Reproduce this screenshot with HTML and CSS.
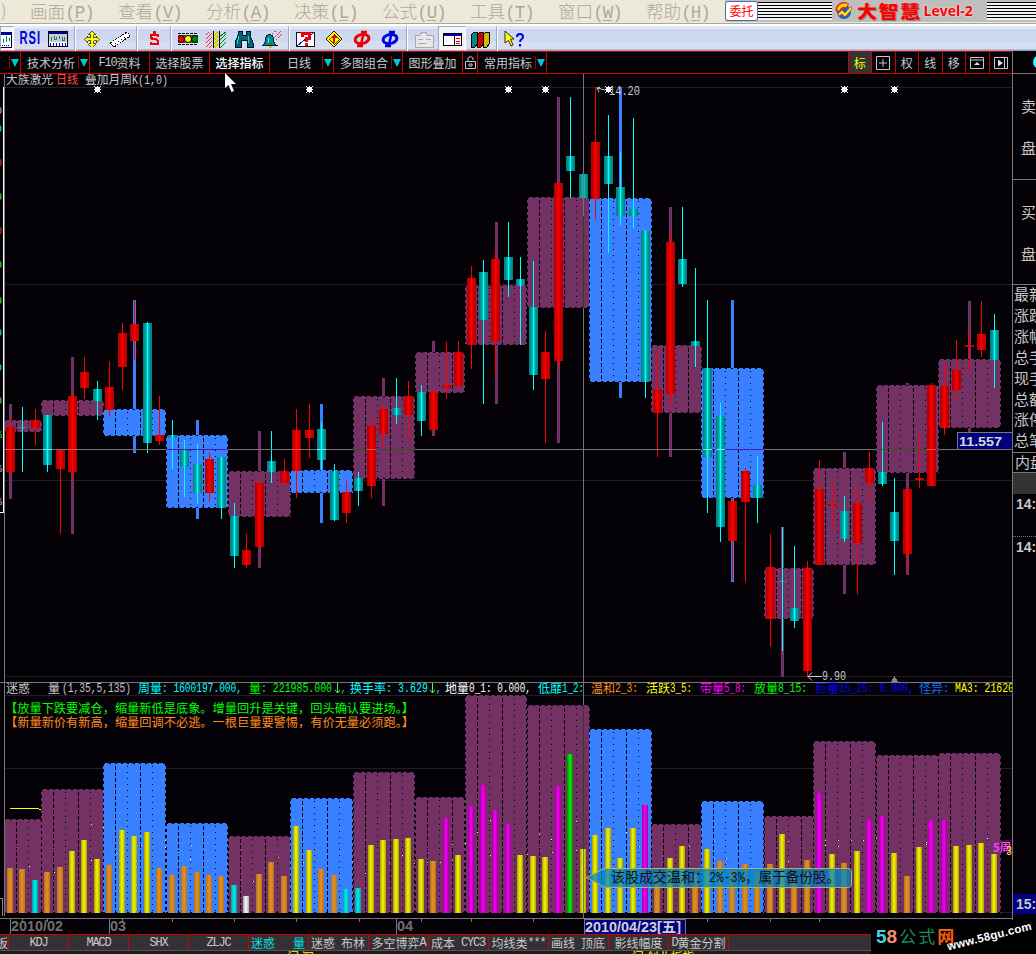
FILE: index.html
```html
<!DOCTYPE html>
<html lang="zh-CN">
<head>
    <meta charset="UTF-8">
    <title>大智慧 Level-2</title>
    <link rel="stylesheet" href="styles.css">
</head>
<body>
    <div class="menubar">
        <span class="menu-first">)</span>
        <span class="menu">画面<i>(<u>P</u>)</i></span>
        <span class="menu">查看<i>(<u>V</u>)</i></span>
        <span class="menu">分析<i>(<u>A</u>)</i></span>
        <span class="menu">决策<i>(<u>L</u>)</i></span>
        <span class="menu">公式<i>(<u>U</u>)</i></span>
        <span class="menu">工具<i>(<u>T</u>)</i></span>
        <span class="menu">窗口<i>(<u>W</u>)</i></span>
        <span class="menu">帮助<i>(<u>H</u>)</i></span>
        <div class="brand">
            <button class="trade">委托</button>
            <span class="stripes stripes-left"></span>
            <span class="logo">
                <svg width="18" height="18" viewBox="0 0 18 18">
                    <circle cx="9" cy="10" r="7" fill="#1c62c4"/>
                    <path d="M1 10A8 8 0 0 1 14 2L12 6A5 5 0 0 0 6 9Z" fill="#e02a18"/>
                    <path d="M2 7Q5 0 13 2L11 5Q6 4 4 9Z" fill="#ffd800"/>
                    <path d="M3 12L7 8L10 11L16 4L17 7L10 15L7 12L4 14Z" fill="#ffe21a" stroke="#c43" stroke-width=".7"/>
                </svg>
                <b class="logo-cn">大智慧</b><b class="logo-en">Level-2</b>
            </span>
            <span class="stripes stripes-right"></span>
        </div>
    </div>

    <div class="toolbar">
        <span class="tool first pressed"><svg viewBox="0 0 20 20"><rect x="-4" y="3" width="22" height="15" fill="#fff" stroke="#002"/><rect x="0" y="3" width="18" height="3" fill="#0000a0"/><path d="M7 8v6M10 10v4M13 7v6M16 9v3" stroke="#088"/><path d="M7 16h10" stroke="#00f" stroke-dasharray="1 1"/></svg></span>
        <span class="tool rsi"><span>RSI</span></span>
        <span class="tool"><svg viewBox="0 0 20 20"><rect x="0.500" y="2.500" width="19" height="15" fill="#ccc" stroke="#000"/><rect x="1" y="3" width="18" height="2" fill="#000080"/><path d="M3 8v4M6 7v3h2v-2M11 10v-3M14 8v3h2v-3" fill="none" stroke="#088"/><rect x="1" y="13" width="18" height="4" fill="#fff"/><path d="M2 15.500h16" stroke="#00f" stroke-width="3" stroke-dasharray="1 2"/></svg></span>
        <span class="sep"></span>
        <span class="tool"><svg viewBox="0 0 20 20"><path d="M10 2l3.500 3.500H11.500v3h3V6.500L18 10l-3.500 3.500v-2h-3v3h2L10 18l-3.500-3.500h2v-3h-3v2L2 10l3.500-3.500v2h3v-3h-2z" fill="#ff0" stroke="#330" stroke-width=".8"/></svg></span>
        <span class="tool"><svg viewBox="0 0 20 20"><path d="M0 14L17 3l3 4L4 18z" fill="#fff" stroke="#000" stroke-dasharray="2 1"/><path d="M5 14l1 1M8 12l1 1M11 10l1 1M14 8l1 1" stroke="#000"/></svg></span>
        <span class="sep"></span>
        <span class="tool"><svg viewBox="0 0 20 20"><path d="M14 8V6H7v3l2 1h3l2 2v3H7v-2M10.500 2v3" fill="none" stroke="#f00" stroke-width="2.500"/></svg></span>
        <span class="sep"></span>
        <span class="tool"><svg class="smooth" viewBox="0 0 20 20"><path d="M0 4.500h20M0 15.500h20" stroke="#000" stroke-dasharray="3 1"/><path d="M0 6h20v8H0z" fill="#555"/><circle cx="3" cy="10" r="3.500" fill="#e00" stroke="#000"/><circle cx="10" cy="10" r="3.500" fill="#ff0" stroke="#000"/><circle cx="17" cy="10" r="3.500" fill="#080" stroke="#000"/></svg></span>
        <span class="tool"><svg viewBox="0 0 20 20"><path d="M0 6l3-3M0 10l6-6M0 14l6-6M0 18l6-6M3 19l3-3" stroke="#f22"/><path d="M8 7l4-4M8 11l4-4M8 15l4-4M8 19l4-4" stroke="#dc0" stroke-width="2"/><path d="M14 7l6-4M14 11l6-6M14 15l6-6M14 19l6-6" stroke="#080"/><path d="M7 2v17M13.500 2v17" stroke="#000"/></svg></span>
        <span class="tool"><svg viewBox="0 0 20 20"><path d="M4 2h4v4h4V2h4v4l3 8v4h-6v-7H7v7H1v-4l3-8z" fill="#067" stroke="#013"/><path d="M5 7l-2 8M14 7l1 7" stroke="#3cc"/></svg></span>
        <span class="tool"><svg viewBox="0 0 20 20"><path d="M1 16c3-2 2-4 3-8 1-3 6-3 7 0 1 4 0 6 3 8z" fill="#088" stroke="#023"/><path d="M6 9v5" stroke="#6ee"/><path d="M7 17h3v2H7z" fill="#cc0"/><path d="M10 5l4-3M13 8l6-6M14 11l6-6" stroke="#f33" stroke-dasharray="2 1"/></svg></span>
        <span class="sep"></span>
        <span class="tool"><svg viewBox="0 0 20 20"><rect x="0.500" y="3.500" width="18" height="14" fill="#fff" stroke="#111"/><path d="M1 17L17 4" stroke="#00f"/><path d="M6 8V4.500h7.500V9H10v3.500" fill="none" stroke="#e00" stroke-width="3"/><path d="M8.500 14h3.500v3H8.500z" fill="#e00"/></svg></span>
        <span class="tool"><svg viewBox="0 0 20 20"><path d="M10 2l8 8-8 8-8-8z" fill="#ff0" stroke="#220"/><path d="M10 4.500l5.500 5.500-5.500 5.500L4.500 10z" fill="none" stroke="#000" stroke-width=".8"/><path d="M10 14V7M7.500 9L10 6.500 12.500 9" fill="none" stroke="#e00" stroke-width="1.500"/></svg></span>
        <span class="tool"><svg class="smooth" viewBox="0 0 20 20"><ellipse cx="10" cy="10" rx="7" ry="4.500" transform="rotate(-12 10 10)" fill="none" stroke="#e00" stroke-width="3"/><path d="M12 3L8.500 17M9 3h6M5 17h6" stroke="#e00" stroke-width="2.500"/></svg></span>
        <span class="tool"><svg class="smooth" viewBox="0 0 20 20"><ellipse cx="10" cy="10" rx="7" ry="4.500" transform="rotate(-12 10 10)" fill="none" stroke="#00d" stroke-width="3"/><path d="M12 3L8.500 17M9 3h6M5 17h6" stroke="#00d" stroke-width="2.500"/></svg></span>
        <span class="sep"></span>
        <span class="tool"><svg viewBox="0 0 20 20"><path d="M1 6h5l2-3h4l1 3h6v12H1z" fill="#e8e8ea" stroke="#aaa"/><path d="M4 10h5M4 14h8M12 10h5" stroke="#aaa"/></svg></span>
        <span class="tool pressed"><svg viewBox="0 0 20 20"><rect x="1.500" y="4.500" width="18" height="12" fill="#fff" stroke="#000"/><rect x="2" y="5" width="17" height="2" fill="#0000b0"/><path d="M12.500 7v10" stroke="#000"/><path d="M14 9.500h4M14 12.500h4M14 14.500h4" stroke="#e00"/></svg></span>
        <span class="tool"><svg viewBox="0 0 20 20"><path d="M1 6l3-3h3v12l-2 3H1z" fill="#088" stroke="#000"/><path d="M7 6l3-3h3v12l-2 3H7z" fill="#c00" stroke="#000"/><path d="M13 6l3-3h3v12l-2 3h-4z" fill="#cb0" stroke="#000"/></svg></span>
        <span class="sep"></span>
        <span class="tool"><svg class="smooth" viewBox="0 0 20 20"><path d="M1 2l9 8H6.500l2.500 6-2 1-2.500-5.500L1 14z" fill="#ff0" stroke="#000" stroke-width=".8"/><path d="M13 8c0-4 6-4 6 0 0 2-3 2-3 5M16 15v2.500" fill="none" stroke="#00e" stroke-width="2"/></svg></span>
    </div>

    <div class="workspace">
        <div class="left">
            <div class="tabs">
                <span class="tab t-drop0"><i class="drop"></i></span>
                <span class="tab t-tech">技术分析<i class="drop"></i></span>
                <span class="tab t-f10"><i class="half">F10</i>资料</span>
                <span class="tab t-pick">选择股票</span>
                <span class="tab t-index lit">选择指标</span>
                <span class="tab t-day">日线<i class="drop"></i></span>
                <span class="tab t-multi">多图组合<i class="drop"></i></span>
                <span class="tab t-over">图形叠加</span>
                <span class="tab t-lock"><svg width="13" height="15" viewBox="0 0 13 15"><path d="M4 6V3q3-3 5 0v2M1.500 6.500h10v7h-10zM5 9h3v2H5z" fill="none" stroke="#c8c8c8"/></svg></span>
                <span class="tab t-common">常用指标<i class="drop"></i></span>
                <span class="fill"></span>
                <span class="tab sq active">标</span>
                <span class="tab sq"><svg width="14" height="14" viewBox="0 0 14 14"><path d="M.5.5h13v13H.5zM7 3v8M3 7h8" fill="none" stroke="#c8c8c8"/></svg></span>
                <span class="tab sq">权</span>
                <span class="tab sq">线</span>
                <span class="tab sq">移</span>
                <span class="tab sq"><svg width="14" height="14" viewBox="0 0 14 14"><path d="M.5 1.500h13v11H.5zM.5 4h13" fill="none" stroke="#c8c8c8"/><path d="M7 6l3 3H4z" fill="#ddd"/></svg></span>
                <span class="tab sq"><svg width="14" height="14" viewBox="0 0 14 14"><path d="M.5 1.500h13v11H.5zM10.500 1.500v11" fill="none" stroke="#c8c8c8"/><path d="M4 3.500l5 3.500-5 3.500z" fill="#ddd"/></svg></span>
            </div>
            <svg id="chart" width="1013" height="861" viewBox="0 74 1013 861"></svg>
        </div>
        <div class="side">
            <div class="side-top"><span class="dot"></span></div>
            <div class="side-box sell"><span>卖</span><span>盘</span></div>
            <div class="side-box buy"><span>买</span><span>盘</span></div>
            <div class="side-box quote">
                <span>最新</span><span>涨跌</span><span>涨幅</span><span>总手</span><span>现手</span><span>总额</span><span>涨停</span><span>总笔</span>
            </div>
            <div class="side-box inner"><span>内盘</span></div>
            <div class="side-head"></div>
            <div class="side-time">14:</div>
            <div class="side-time dotted">14:</div>
            <div class="side-now">15:</div>
        </div>
    </div>

    <div class="bottom-tabs">
        <span class="btab b-first">板</span>
        <span class="btab"><i class="half">KDJ</i></span>
        <span class="btab"><i class="half">MACD</i></span>
        <span class="btab"><i class="half">SHX</i></span>
        <span class="btab"><i class="half">ZLJC</i></span>
        <span class="btab on wide"><em>迷惑</em><em>量</em></span>
        <span class="btab wide"><em>迷惑</em><em>布林</em></span>
        <span class="btab">多空博弈<i class="half">A</i></span>
        <span class="btab wide"><em>成本</em><i class="half">CYC3</i></span>
        <span class="btab">均线类<i class="half">***</i></span>
        <span class="btab wide"><em>画线</em><em>顶底</em></span>
        <span class="btab">影线幅度</span>
        <span class="btab"><i class="half">D</i>黄金分割</span>
    </div>
    <div class="ticker"><span class="tick-a">门 深</span><span class="tick-b">门 创业板指</span></div>

    <div class="watermark">
        <span class="wm-58"><b>5</b><b>8</b></span><span class="wm-cn"><b>公</b><b>式</b><b>网</b></span>
        <span class="wm-url">www.58gu.com</span>
    </div>
    <svg class="pointer" width="12" height="19" viewBox="0 0 12 19"><path d="M0 0v15l3.500-3 3 7 2.500-1-3-7H11z" fill="#fff"/></svg>

    <script src="chart.js"></script>
</body>
</html>
```
FILE: styles.css
```css
* {
    box-sizing: border-box;
}
body {
    margin: 0;
    width: 1036px;
    height: 954px;
    overflow: hidden;
    background: #040206;
    color: #c8c8c8;
    font-family: "Noto Sans CJK SC", sans-serif;
    font-size: 12px;
    display: flex;
    flex-direction: column;
}
i, em {
    font-style: normal;
}
.half {
    font-family: "Liberation Mono", monospace;
    letter-spacing: -1.2px;
    padding-top: 2px;
}

/* menu */
.menubar {
    height: 26px;
    flex: none;
    display: flex;
    background: linear-gradient(#ece9d8 23px, #aca899 23px, #aca899 24px, #fff 24px);
    color: #aca899;
    font-size: 17.6px;
    font-weight: 300;
    line-height: 22px;
    white-space: nowrap;
}
.menu-first {
    width: 30px;
    flex: none;
    padding-left: 1px;
    line-height: 20px;
}
.menu {
    width: 88px;
    flex: none;
}
.menu i {
    font-family: "Liberation Mono", monospace;
    letter-spacing: -1px;
}
.menu u {
    text-underline-offset: 2px;
    text-decoration-thickness: 1px;
}
.brand {
    flex: 1;
    margin-left: -9px;
    height: 22px;
    display: flex;
    align-items: center;
    background: #c0bebc;
}
.trade {
    width: 33px;
    height: 20px;
    margin: 0;
    padding: 0;
    border: 1px solid #4870a8;
    border-radius: 3px;
    background: #fff;
    color: #f00;
    font-family: inherit;
    font-size: 12px;
    line-height: 16px;
}
.stripes {
    height: 18px;
    background: repeating-linear-gradient(#000 0 1px, #f4f4f4 1px 3px);
}
.stripes-left {
    width: 74px;
}
.stripes-right {
    flex: 1;
}
.logo {
    width: 155px;
    display: flex;
    align-items: center;
    padding-left: 3px;
    color: #f00;
}
.logo-cn {
    margin-left: 4px;
    font-size: 20px;
    font-weight: 900;
    letter-spacing: 1.5px;
    text-shadow: 1px 1px 0 #888;
    transform: scaleY(0.85);
}
.logo-en {
    margin-left: 2px;
    font-family: "Open Sans", sans-serif;
    font-size: 14px;
    font-weight: 700;
    text-shadow: 0 0 2px #fff;
}

/* toolbar */
.toolbar {
    height: 25px;
    flex: none;
    display: flex;
    align-items: stretch;
    background: linear-gradient(#e0e8f6 0 3px, #cbd8f0 3px 15px, #d8def2 15px 23px, #8ca0c0 24px);
}
.tool {
    width: 28px;
    flex: none;
    display: flex;
    align-items: center;
    justify-content: center;
}
.tool svg {
    width: 20px;
    height: 20px;
    shape-rendering: crispEdges;
}
.tool svg.smooth {
    shape-rendering: auto;
}
.tool.first {
    width: 14px;
    margin-right: 2px;
    justify-content: flex-end;
    overflow: hidden;
}
.tool.first svg {
    flex: none;
}
.tool.pressed {
    background: #f4f4f6;
    border: 1px solid #a0a8b8;
    border-right-color: #fff;
}
.rsi {
    color: #0000d8;
    font-family: "Liberation Sans", sans-serif;
    font-size: 18px;
    font-weight: bold;
    letter-spacing: 1.5px;
}
.rsi span {
    transform: scaleX(0.62);
}
.sep {
    width: 6px;
    flex: none;
    background: linear-gradient(90deg, transparent 2px, #9ca8bc 2px 3px, #fff 3px 4px, transparent 4px);
}

/* main area */
.workspace {
    height: 883px;
    flex: none;
    display: flex;
}
.left {
    width: 1013px;
    flex: none;
}
.tabs {
    height: 23px;
    display: flex;
    border-top: 1px solid #d00000;
    border-bottom: 1px solid #d00000;
    line-height: 21px;
    white-space: nowrap;
}
.tab {
    flex: none;
    display: flex;
    align-items: center;
    justify-content: center;
    border-right: 1px solid #d00000;
}
.drop {
    width: 11px;
    height: 13px;
    border-left: 1px solid #a00000;
    display: flex;
    justify-content: center;
    align-items: center;
}
.drop::before {
    content: "";
    border: 4px solid transparent;
    border-top: 8px solid #00c8c8;
    border-bottom: 0;
}
.tab .drop {
    margin-left: auto;
}
.t-drop0 { width: 21px; }
.t-tech { width: 69px; padding-left: 6px; }
.t-f10 { width: 60px; }
.t-pick { width: 60px; }
.t-index { width: 60px; }
.t-day { width: 64px; padding-left: 17px; }
.t-multi { width: 69px; padding-left: 6px; }
.t-over { width: 60px; }
.t-lock { width: 15px; }
.t-common { width: 69px; padding-left: 6px; }
.lit {
    color: #fff;
    font-weight: 500;
}
.fill {
    flex: 1;
    border-right: 1px solid #d00000;
}
.sq {
    width: 23.5px;
}
.sq.active {
    background: #333;
    color: #ff0;
}
#chart {
    display: block;
    font-family: "Noto Sans CJK SC", sans-serif;
}
#chart .crisp {
    shape-rendering: crispEdges;
}

/* quote column */
.side {
    flex: 1;
    overflow: hidden;
    border-left: 1px solid #777;
    white-space: nowrap;
    font-size: 15px;
    line-height: 21px;
    margin-left: -1px;
    z-index: 1;
}
.side-top {
    height: 23px;
    padding: 4px 0 0 20px;
    border-bottom: 1px solid #777;
}
.dot {
    display: block;
    width: 14px;
    height: 14px;
    border-radius: 50%;
    background: #3ff;
}
.side-box {
    border-bottom: 1px solid #777;
}
.side-box span {
    display: block;
}
.sell, .buy {
    height: 106px;
    padding: 21px 0 0 8px;
}
.buy {
    height: 105px;
}
.sell span + span, .buy span + span {
    margin-top: 21px;
}
.quote {
    height: 168px;
    padding-left: 1px;
    line-height: 20.9px;
}
.quote span {
    position: relative;
    top: -1px;
}
.inner {
    height: 20px;
    padding-left: 2px;
    line-height: 17px;
}
.side-head {
    height: 21px;
    background: #333;
}
.side-time {
    height: 42px;
    padding-left: 3px;
    font-family: "Liberation Sans", sans-serif;
    font-size: 14px;
    font-weight: bold;
    line-height: 20px;
}
.side-time.dotted {
    border-top: 1px dotted #777;
}
.side-now {
    height: 20px;
    margin-top: 316px;
    padding-left: 3px;
    background: #000080;
    font-family: "Liberation Sans", sans-serif;
    font-size: 14px;
    font-weight: bold;
    line-height: 20px;
}

/* bottom */
.bottom-tabs {
    height: 16px;
    flex: none;
    display: flex;
    background: #333135;
    border-top: 1px solid #d00000;
    line-height: 15px;
    white-space: nowrap;
}
.btab {
    width: 60px;
    flex: none;
    display: flex;
    align-items: center;
    justify-content: center;
    border-right: 1px solid #d00000;
    overflow: hidden;
}
.b-first {
    width: 9px;
    justify-content: flex-end;
}
.wide {
    justify-content: space-between;
    padding: 0 3px 0 2px;
}
.on {
    color: #00e0e0;
}
.ticker {
    height: 4px;
    flex: none;
    overflow: hidden;
    display: flex;
    border-top: 1px solid #555;
    background: #1c1c1e;
    color: #ff0;
    line-height: 12px;
}
.tick-a {
    margin-left: 287px;
}
.tick-b {
    margin-left: 318px;
}
.watermark {
    position: absolute;
    left: 871px;
    top: 920px;
    width: 165px;
    height: 34px;
    overflow: hidden;
    background: #000;
    line-height: 32px;
    white-space: nowrap;
    z-index: 2;
}
.wm-58 {
    margin-left: 5px;
    font-family: "Liberation Sans", sans-serif;
    font-size: 19px;
}
.wm-58 b:first-child { color: #40d8e0; }
.wm-58 b:last-child { color: #f09070; }
.wm-cn {
    margin-left: 2px;
    font-size: 17px;
    letter-spacing: 2px;
}
.wm-cn b { font-weight: 400; color: #1e8a62; }
.wm-cn b:last-child { font-weight: 700; color: #f06010; }
.wm-url {
    position: absolute;
    left: 75px;
    top: 8px;
    color: #fff;
    font-family: "Liberation Sans", sans-serif;
    font-size: 11.5px;
    font-weight: bold;
    line-height: 16px;
    letter-spacing: 0.3px;
    transform: rotate(-14deg);
}
.pointer {
    position: absolute;
    left: 225px;
    top: 73px;
    z-index: 3;
}
```
FILE: chart.js
```js
// colour, high, body top, body bottom, low
const candles = [
    ['r',418,427,472,476],['c',407,427,428,472],['r',409,420,428,445],['c',415,415,465,472],['r',450,450,469,534],
    ['r',394,396,472,482],['r',357,372,388,399],['c',381,389,401,420],['r',361,387,410,417],['r',323,333,367,390],
    ['r',300,324,341,360],['c',322,323,443,453],['r',396,435,441,445],['c',420,435,438,469],['c',440,450,467,497],
    ['c',444,464,493,504],['r',452,459,493,502],['c',457,457,508,519],['c',503,516,556,568],['r',534,550,565,568],
    ['r',479,483,547,547],['c',431,461,472,483],['r',459,471,483,487],['r',409,430,471,498],['r',404,430,438,458],
    ['c',422,429,460,471],['c',464,471,520,521],['r',481,492,513,523],['c',472,478,491,506],['r',417,426,486,498],
    ['r',405,409,434,447],['c',378,408,415,424],['r',381,396,415,438],['c',385,392,421,436],['r',389,392,430,430],
    ['r',342,385,388,399],['r',341,352,386,386],['r',266,278,345,369],['c',260,272,320,404],['r',252,259,341,375],
    ['c',222,257,280,297],['c',257,279,286,345],['c',261,307,375,390],['r',331,352,379,443],['r',183,183,361,369],
    ['c',97,156,171,198],['c',135,174,198,216],['r',87,142,199,219],['c',115,156,184,253],['c',152,187,216,225],
    ['c',118,209,216,228],['c',230,231,382,398],['r',350,389,413,457],['r',231,242,394,409],['c',207,259,284,287],
    ['c',268,341,346,367],['c',300,368,457,513],['c',403,416,527,542],['r',498,501,541,580],['r',468,471,502,582],
    ['c',456,485,498,523],['r',534,567,619,647],['c',527,581,582,651],['c',546,608,621,628],['r',561,568,671,677],
    ['r',460,489,565,565],['r',483,504,506,530],['c',496,511,539,542],['r',486,503,543,594],['r',452,468,483,502],
    ['c',422,472,484,486],['c',478,512,541,575],['r',489,489,554,571],['r',434,478,480,488],['r',383,385,486,486],
    ['r',364,386,428,435],['r',340,370,390,399],['r',331,345,347,373],['r',301,334,350,357],['c',314,330,360,388]
];

// left, right, top, bottom, colour, wick x, wick top, wick bottom, volume top
const weeks = [
    [4,42,420,432,'p',10,404,499,819],[41,104,400,416,'p',72,357,534,789],[103,166,409,436,'b',134,300,453,763],
    [166,228,435,508,'b',197,420,519,823],[228,291,471,517,'p',259,431,568,836],[290,353,470,493,'b',321,404,523,798],
    [353,415,396,479,'p',383,378,506,772],[415,465,352,393,'p',433,341,436,797],[465,527,285,345,'p',496,222,404,695],
    [527,590,197,308,'p',558,97,443,705],[589,652,198,382,'b',620,87,398,729],[651,702,345,413,'p',670,207,457,824],
    [701,764,368,498,'b',732,300,582,801],[764,814,568,619,'p',782,527,677,816],[813,876,468,565,'p',844,452,594,741],
    [876,939,385,473,'p',907,383,575,755],[938,1001,359,428,'p',969,301,433,753]
];

// daily volume: colour key + top
const volumes = ('o868 o869 c880 o872 o867 y851 y840 y859 o865 y830 y836 y832 o868 o875 o866 o872 o875 o876 c885 w896 ' +
    'o874 o862 o876 y826 y850 o869 o875 c889 c888 y845 y840 y839 y838 y859 o861 m818 y855 m806 m785 m810 ' +
    'm824 y855 y856 y857 m786 g754 y849 y835 y828 y858 y828 m805 o872 y858 y846 o874 y849 o861 o871 o864 ' +
    'o873 o864 y834 o876 o860 m793 y854 o863 y851 m819 m816 y853 o876 y847 m820 m820 y846 y845 y843 y854').split(' ');

const fills = { p: '#743264', b: '#3880ff' };
const out = [];
const rect = (x, y, w, h, fill) => out.push(`<rect x="${x}" y="${y}" width="${w}" height="${h}" fill="${fill}"/>`);
const line = (x1, y1, x2, y2, stroke, dash = '') =>
    out.push(`<path d="M${x1} ${y1}L${x2} ${y2}" stroke="${stroke}" stroke-dasharray="${dash}"/>`);
const text = (x, y, s, fill, len, size = 12, extra = '') =>
    out.push(`<text x="${x}" y="${y}" fill="${fill}" font-size="${size}" textLength="${len}" lengthAdjust="spacingAndGlyphs" xml:space="preserve" ${extra}>${s}</text>`);
const px = i => Math.floor(10.2 + 12.456 * i);

const grad = (id, edge, mid, core) => `<linearGradient id="${id}">
    <stop offset="0" stop-color="${edge}"/><stop offset=".35" stop-color="${mid}"/>
    <stop offset=".5" stop-color="${core}"/><stop offset=".65" stop-color="${mid}"/>
    <stop offset="1" stop-color="${edge}"/></linearGradient>`;
out.push('<defs>' + grad('r', '#b00000', '#d80000', '#ff0000') + grad('c', '#087878', '#00a8a8', '#00ffff') +
    grad('vo', '#b07818', '#d88820', '#e89028') + grad('vy', '#a0a000', '#e0e000', '#f4f400') +
    grad('vc', '#00a0a0', '#00d8d8', '#00f0f0') + grad('vm', '#a000a0', '#e000e0', '#f000f0') +
    grad('vg', '#008800', '#00d800', '#00f800') + grad('vw', '#aaaaaa', '#dddddd', '#ffffff') + '</defs>');

function weekBox(l, r, t, b, key) {
    rect(l, t, r - l, b - t, fills[key]);
    line(l, t + .5, r, t + .5, '#040206', '2 4');
    line(l, b - .5, r, b - .5, '#040206', '2 4');
    line(l + .5, t, l + .5, b, '#040206', '3 3');
    line(r - .5, t, r - .5, b, '#040206', '3 3');
    for (let k = 1, x = l + 12.45; x < r - 4; k++, x += 12.45) {
        line(Math.floor(x) + .5, t + 3, Math.floor(x) + .5, b, '#040206', k % 2 ? '4 2' : '1 5');
    }
}

out.push('<g class="crisp">');
[87, 284, 480, 676, 695, 768, 840, 912].forEach(y => line(5, y + .5, 1013, y + .5, '#222024'));
weeks.forEach(w => {
    rect(w[5] - 1, w[6], 3, w[7] - w[6], fills[w[4]]);
    weekBox(...w.slice(0, 5));
    weekBox(w[0], w[1], w[8], 913, w[4]);
});

// moving averages of the volume, visible only as specks
rect(10, 808, 29, 1, '#ff0');
rect(39, 809, 2, 1, '#ff0');
for (let i = 0; i < 79; i++) {
    if (i % 3 === 0) rect(px(i) + 6, Math.round(847 + 3 * Math.sin(i / 14)), 1, 1, '#f0f');
}
[[91,824],[103,827],[140,835],[165,840],[191,845],[278,857],[352,861],[389,862],[414,863],[427,862],[440,862],[452,860],[490,855],[527,854],
 [552,852],[576,850],[639,846],[714,841],[788,841],[825,840],[838,840],[851,840],[876,838],[926,844]].forEach(p => rect(p[0], p[1], 1, 1, '#ff0'));
[[29,866],[54,872],[91,860],[116,853],[141,845],[165,847],[178,852],[190,859],[253,881],[303,862],[365,873],[402,855],[452,844],[465,843],[477,832],[490,820],
 [539,834],[551,839],[576,821],[626,832],[689,846],[714,858],[726,858],[788,861],[825,845],[838,846],[863,840],[926,842],[987,838]].forEach(p => rect(p[0], p[1], 1, 1, '#fff'));

candles.forEach(([c, hi, top, bot, lo], i) => {
    const x = px(i);
    rect(x, hi, 1, lo - hi, c === 'r' ? '#ff0000' : '#00ffff');
    rect(x - 4, top, 9, Math.max(1, bot - top), `url(#${c})`);
});
volumes.forEach((v, i) => rect(px(i) - 3, +v.slice(1), 6, 913 - v.slice(1), `url(#v${v[0]})`));

// crosshair
line(5, 449.5, 1013, 449.5, '#747474');
line(583.5, 74, 583.5, 918, '#747474');
weeks.filter(w => w[2] < 449 && w[3] > 449).forEach(w => line(w[0], 449.5, w[1], 449.5, w[4] === 'p' ? '#38502c' : '#4818a8'));
line(583.5, 216, 583.5, 308, '#28481c');
line(583.5, 705, 583.5, 849, '#28481c');
candles.forEach(([c, hi, top, bot], i) => {
    if (top < 449 && bot > 449) line(px(i) - 4, 449.5, px(i) + 5, 449.5, c === 'r' ? '#ff5048' : '#70f0f0');
});

// frames
line(4.5, 74, 4.5, 916, '#777');
line(3.5, 87, 3.5, 513, '#fff');
line(0, 512.5, 4, 512.5, '#fff');
line(0, 682.5, 1013, 682.5, '#777');
line(0, 918.5, 1013, 918.5, '#777');
line(1012.5, 74, 1012.5, 918, '#777');
line(0, 898.5, 2, 898.5, '#888');
line(2.5, 898, 2.5, 916, '#888');
[22, 47, 122, 172, 234, 296, 359, 421, 471, 533, 707, 770, 819].forEach(x => line(x + .5, 919, x + .5, 922, '#777'));
[10, 109, 396].forEach(x => line(x + .5, 919, x + .5, 934, '#777'));
rect(957, 432, 56, 18, '#777');
rect(958, 433, 54, 16, '#000080');
rect(584, 919, 102, 16, '#777');
rect(585, 920, 100, 15, '#000080');
out.push('<path d="M891 682h7l-3.500-6z" fill="#887"/>');

// event markers
[97, 309, 508, 545, 608, 844, 894].forEach(x => {
    rect(x - 2, 87, 5, 5, '#fff');
    [[-3, 86], [3, 86], [-3, 92], [3, 92], [0, 86], [0, 92], [-3, 89], [3, 89]].forEach(d => rect(x + d[0], d[1], 1, 1, '#fff'));
});
out.push('</g>');

// price marks
out.push('<path d="M597 88l8 2M597 88l3-1M597 88l2 4M822 676.500h-14M812 672.500l-4 4 4 4" fill="none" stroke="#c8c8c8"/>');
const mono = 'font-family="Liberation Mono"';
const bold = 'font-family="Liberation Sans" font-weight="bold"';
text(609, 95, '14.20', '#c8c8c8', 31, 12, mono);
text(822, 680, '9.90', '#c8c8c8', 24, 12, mono);
text(959, 446, '11.557', '#d8d8d8', 43, 13, bold);
text(11, 931, '2010/02', '#707070', 52, 14, bold);
text(110, 931, '03', '#707070', 16, 14, bold);
text(397, 931, '04', '#707070', 16, 14, bold);
text(585, 932, '2010/04/23[五]', '#d0d0d0', 96, 14, 'font-family="Liberation Sans, Noto Sans CJK SC" font-weight="bold"');

text(6, 84, '大族激光', '#c8c8c8', 47);
text(56, 84, '日线', '#ff5050', 22);
text(85, 84, '叠加月周', '#c8c8c8', 47);
text(132, 84, 'K(1,0)', '#c8c8c8', 36, 12, mono);

// indicator header: x, label, width, colour, number x, number, width
[[6,'迷惑',24,'#c8c8c8'],[48,'量',12,'#c8c8c8',62,'(1,35,5,135)',69],
 [138,'周量',24,'#00ffff',162,': 1600197.000,',80],[249,'量',12,'#00ff00',261,': 221985.000',71],
 [350,'换手率',36,'#00ffff',386,': 3.629',42],[445,'地量',24,'#fff',469,'0_1: 0.000,',62],
 [538,'低靡',24,'#00ffff',562,'1_2:',22],[591,'温和',24,'#ff9020',615,'2_3:',23],[646,'活跃',24,'#ffff00',670,'3_5:',22],
 [700,'带量',24,'#ff00ff',724,'5_8:',22],[754,'放量',24,'#00ff00',778,'8_15:',29],
 [815,'巨量',24,'#0000ff',839,'15_25: 0.000,',75],[919,'怪异',24,'#1070ff',943,':',6],[0,'',0,'#ffff00',955,'MA3: 21620',59]
].forEach(([x, cn, w, color, nx, num, nw]) => {
    if (cn) text(x, 692.5, cn, color, w);
    if (num) text(nx, 692, num, color, nw, 12, mono);
});
out.push('<path d="M337.500 683v10M335 690l2.500 3 2.500-3M432.500 683v10M430 690l2.500 3 2.500-3" fill="none" stroke="#40ff40"/>');
text(341, 692, ',', '#00ff00', 5, 12, mono);
text(436, 692, ',', '#00ffff', 5, 12, mono);
text(5, 713, '【放量下跌要减仓，缩量新低是底象。增量回升是关键，回头确认要进场。】', '#00ff00', 409);
text(5, 727, '【新量新价有新高，缩量回调不必逃。一根巨量要警惕，有价无量必须跑。】', '#ff8c20', 409);

// axis digits cut by the window edge
[[114,'#c8c8c8'],[132,'#00ffff'],[166,'#ff3030'],[200,'#40ff40'],[234,'#ff3030'],[268,'#40ff40'],[304,'#40ff40'],[336,'#00ffff'],[371,'#00ffff'],
 [404,'#40ff40'],[438,'#40ff40'],[472,'#c8c8c8'],[505,'#c8c8c8']].forEach(([y, c], i) => text(-4, y, i > 9 ? '%' : '0', c, 6, 11, mono));

text(993, 852, '5周', '#ff40ff', 18, 12, 'font-weight="bold"');
text(1006, 855, '3', '#ffff00', 6, 12, mono);

// tooltip over the volume pane
out.push('<path d="M586 877.500L602 870l3-1.500h244l2.500 2.500v14l-2.500 2.500h-244l-3-2z" fill="#0088c8" fill-opacity=".75" stroke="#c0b040"/>');
text(611, 882, '该股成交温和：', '#101010', 98, 14);
text(709, 882, '2%-3%', '#101010', 36, 14, mono);
text(745, 882, '，属于备份股。', '#101010', 95, 14);

document.getElementById('chart').innerHTML = out.join('');
```
